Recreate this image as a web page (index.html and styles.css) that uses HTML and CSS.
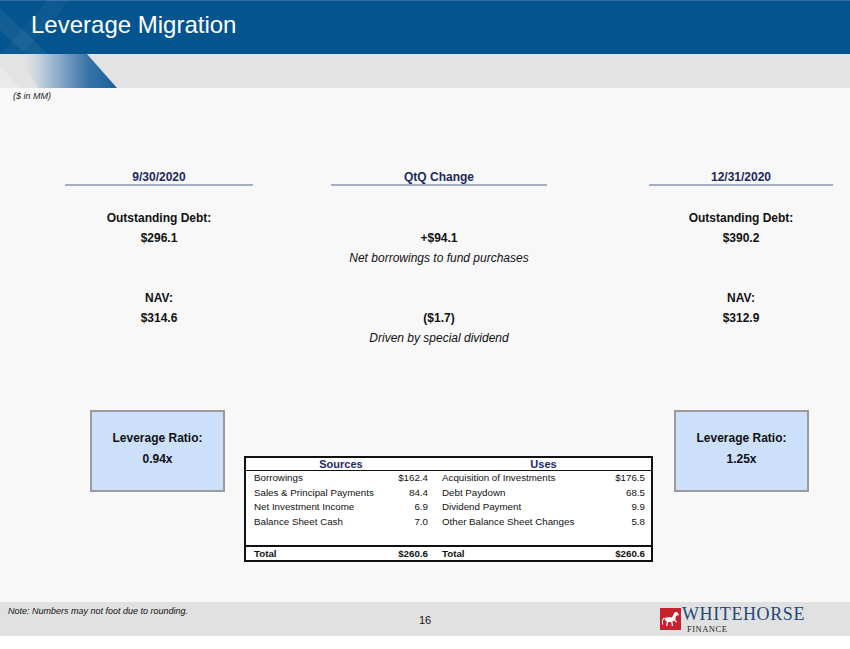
FILE: index.html
```html
<!DOCTYPE html>
<html lang="en">
<head>
<meta charset="utf-8">
<title>Leverage Migration</title>
<link rel="stylesheet" href="styles.css">
</head>
<body>
<div class="slide">
  <header class="top">
    <svg class="deco" width="130" height="88" viewBox="0 0 130 88" aria-hidden="true">
      <defs>
        <linearGradient id="g1" x1="0" y1="0" x2="1" y2="0">
          <stop offset="0" stop-color="#e3e3e3" stop-opacity="0"/>
          <stop offset="0.25" stop-color="#b9cadb"/>
          <stop offset="0.7" stop-color="#3a74a8"/>
          <stop offset="1" stop-color="#14609d"/>
        </linearGradient>
      </defs>
      <polygon points="0,8 0,30 26,54 48,54" fill="#ffffff" fill-opacity="0.06"/>
      <polygon points="0,54 22,54 70,0 48,0" fill="#ffffff" fill-opacity="0.04"/>
      <polygon points="18,54 87,54 117,88 38,88" fill="url(#g1)"/>
      <polygon points="0,66 0,88 20,88" fill="#ffffff" fill-opacity="0.25"/>
    </svg>
    <div class="title-bar"><h1>Leverage Migration</h1></div>
    <div class="sub-band"></div>
  </header>

  <main class="content">
    <p class="units">($ in MM)</p>

    <section class="compare">
      <div class="col-head c1">9/30/2020</div>
      <div class="col-head c2">QtQ Change</div>
      <div class="col-head c3">12/31/2020</div>

      <div class="metric c1"><div class="bold">Outstanding Debt:</div><div class="bold">$296.1</div></div>
      <div class="metric change c2"><div class="bold">+$94.1</div><div class="note">Net borrowings to fund purchases</div></div>
      <div class="metric c3"><div class="bold">Outstanding Debt:</div><div class="bold">$390.2</div></div>

      <div class="metric c1"><div class="bold">NAV:</div><div class="bold">$314.6</div></div>
      <div class="metric change c2"><div class="bold">($1.7)</div><div class="note">Driven by special dividend</div></div>
      <div class="metric c3"><div class="bold">NAV:</div><div class="bold">$312.9</div></div>
    </section>

    <section class="bottom">
      <div class="ratio-box">
        <div>Leverage Ratio:</div>
        <div>0.94x</div>
      </div>

      <div class="su-table">
        <div class="su-row su-head">
          <div class="span2">Sources</div>
          <div class="span2 uses">Uses</div>
        </div>
        <div class="su-body">
          <div class="su-row"><div>Borrowings</div><div class="num">$162.4</div><div class="lab2">Acquisition of Investments</div><div class="num">$176.5</div></div>
          <div class="su-row"><div>Sales &amp; Principal Payments</div><div class="num">84.4</div><div class="lab2">Debt Paydown</div><div class="num">68.5</div></div>
          <div class="su-row"><div>Net Investment Income</div><div class="num">6.9</div><div class="lab2">Dividend Payment</div><div class="num">9.9</div></div>
          <div class="su-row"><div>Balance Sheet Cash</div><div class="num">7.0</div><div class="lab2">Other Balance Sheet Changes</div><div class="num">5.8</div></div>
        </div>
        <div class="su-row su-total"><div>Total</div><div class="num">$260.6</div><div class="lab2">Total</div><div class="num">$260.6</div></div>
      </div>

      <div class="ratio-box">
        <div>Leverage Ratio:</div>
        <div>1.25x</div>
      </div>
    </section>
  </main>

  <footer class="foot">
    <p class="foot-note">Note: Numbers may not foot due to rounding.</p>
    <span class="page-no">16</span>
    <div class="logo">
      <svg class="logo-mark" width="21" height="22" viewBox="0 0 21 22" aria-hidden="true">
        <rect width="21" height="22" fill="#c4232d"/>
        <path d="M4.5 10.5 C6 9 9.5 9 12 9.5 L14 5.5 C15 3.8 17 3.6 18.2 5.2 L18.8 7.4 L17.3 7.3 L15.8 8.6 L15.3 11.5 L17 14 L16 14.6 L14.3 12.4 L12.4 13.4 L13 18 L11.9 18 L11.2 14 L8.3 14 L7.3 18 L6.2 18 L6.7 13.4 C5.3 12.8 4.8 11.8 4.5 10.5 Z" fill="#ffffff"/>
        <path d="M4.6 10.2 C3 11 2.6 14 3.2 16.6 L2.2 16.6 C1.6 13.6 2 10.6 4.4 9.6 Z" fill="#ffffff"/>
      </svg>
      <div class="logo-text">
        <div class="logo-name">WHITEHORSE</div>
        <div class="logo-sub">FINANCE</div>
      </div>
    </div>
  </footer>
  <div class="after"></div>
</div>
</body>
</html>
```

FILE: styles.css
```css
* { box-sizing: border-box; }

html, body {
  margin: 0;
  padding: 0;
  background: #ffffff;
}

body {
  font-family: "Liberation Sans", Arial, sans-serif;
  color: #111111;
}

.slide {
  width: 850px;
  height: 649px;
  overflow: hidden;
  display: flex;
  flex-direction: column;
}

/* ---------- header ---------- */
.top {
  position: relative;
  height: 88px;
  flex: none;
}

.deco {
  position: absolute;
  left: 0;
  top: 0;
}

.title-bar {
  height: 54px;
  background: #04548f;
  border-top: 1px solid #2e6ba1;
}

.title-bar h1 {
  position: relative;
  margin: 0;
  padding: 12px 0 0 31px;
  font-size: 24px;
  line-height: 24px;
  font-weight: normal;
  color: #ffffff;
}

.sub-band {
  height: 34px;
  background: #e3e3e3;
}

/* ---------- content ---------- */
.content {
  flex: none;
  height: 514px;
  background: #f8f8f8;
  display: flex;
  flex-direction: column;
}

.units {
  margin: 2px 0 0 13px;
  font-size: 9px;
  line-height: 12px;
  font-style: italic;
  color: #222222;
}

.compare {
  margin: 68px 0 0 65px;
  display: grid;
  grid-template-columns: 188px 78px 216px 102px 184px;
  grid-auto-rows: auto;
  row-gap: 20px;
}

.c1 { grid-column: 1; }
.c2 { grid-column: 3; }
.c3 { grid-column: 5; }

.col-head {
  text-align: center;
  font-size: 12px;
  font-weight: bold;
  line-height: 14px;
  color: #1b2a5c;
  border-bottom: 2px solid #a3aec3;
  margin-bottom: 2px;
}

.metric {
  text-align: center;
  font-size: 12px;
  line-height: 20px;
  height: 60px;
}

.metric.change {
  padding-top: 20px;
}

.bold { font-weight: bold; }

.note { font-style: italic; }

/* ---------- bottom ---------- */
.bottom {
  margin: 62px 0 0 90px;
  display: flex;
  align-items: flex-start;
}

.ratio-box {
  width: 135px;
  height: 82px;
  border: 2px solid #9b9b9b;
  background: #cce0fc;
  padding-top: 16px;
  text-align: center;
  font-size: 12px;
  font-weight: bold;
  line-height: 21px;
}

.su-table {
  margin: 46px 21px 0 19px;
  width: 409px;
  border: 2px solid #111111;
  background: #ffffff;
  font-size: 9.75px;
}

.su-row {
  display: grid;
  grid-template-columns: 128px 46px 164px 53px;
  padding: 0 6px 0 8px;
  line-height: 14.5px;
}

.su-row .num { text-align: right; }
.su-row .lab2 { padding-left: 14px; }

.su-head {
  line-height: 12px;
  border-bottom: 1px solid #111111;
  font-size: 11px;
  font-weight: bold;
  color: #1c2a68;
  text-align: center;
}

.su-head .span2 { grid-column: span 2; }
.su-head .uses { padding-left: 14px; }

.su-body {
  height: 74px;
}

.su-total {
  border-top: 2px solid #111111;
  font-weight: bold;
  line-height: 13px;
}

/* ---------- footer ---------- */
.foot {
  flex: none;
  height: 34px;
  background: #e1e1e1;
  display: grid;
  grid-template-columns: 1fr auto 1fr;
  align-items: start;
}

.foot-note {
  margin: 3px 0 0 8px;
  font-size: 9px;
  line-height: 12px;
  font-style: italic;
  color: #111111;
}

.page-no {
  margin-top: 11px;
  font-size: 11px;
  line-height: 14px;
  color: #111111;
}

.logo {
  justify-self: end;
  margin: 2px 45px 0 0;
  display: flex;
  align-items: flex-start;
}

.logo-mark {
  margin-top: 4px;
}

.logo-text {
  margin-left: 1px;
  font-family: "Liberation Serif", "Times New Roman", serif;
}

.logo-name {
  font-size: 18px;
  line-height: 20px;
  letter-spacing: 0.6px;
  color: #23497a;
}

.logo-sub {
  margin-left: 5px;
  font-size: 8.5px;
  line-height: 10px;
  letter-spacing: 0.5px;
  color: #222222;
}

.after {
  flex: 1;
  background: #ffffff;
}
```
